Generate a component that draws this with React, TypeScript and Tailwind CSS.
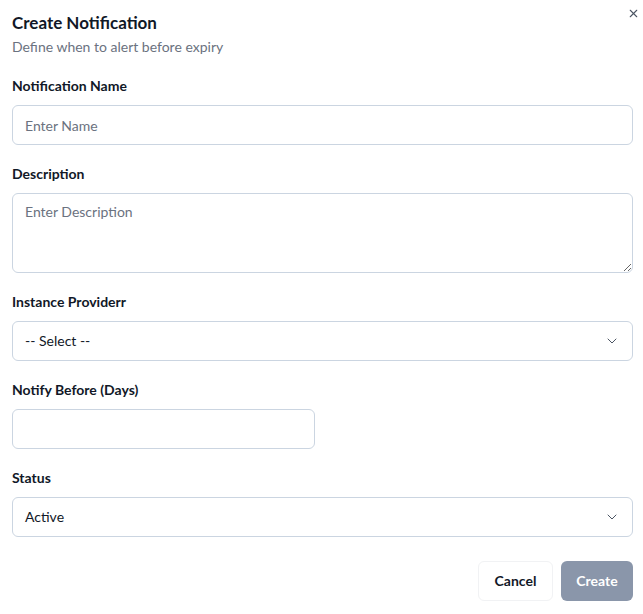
import { X, ChevronDown } from 'lucide-react'

const FONT = "font-['Lato','Segoe_UI','Noto_Sans',sans-serif]"

function Label({ children }: { children: React.ReactNode }) {
  return <label className="block text-sm leading-[18px] font-bold text-[#111827] mb-[10px]">{children}</label>
}

function Select({ value }: { value: string }) {
  return (
    <div className="relative">
      <div className="h-10 w-full rounded-md border border-[#cbd5e1] bg-white px-3 flex items-center text-sm text-[#111827]">
        {value}
      </div>
      <ChevronDown className="absolute right-[13px] top-[12px] w-4 h-4 text-[#4b5563]" strokeWidth={1.5} />
    </div>
  )
}

export default function App() {
  return (
    <div className={`${FONT} relative bg-white w-[643px] h-[614px] pl-3 pr-[10px] pt-[9px]`}>
      <button className="absolute right-[3px] top-[7px] text-[#4b5563]">
        <X className="w-[13px] h-[13px]" strokeWidth={2} />
      </button>

      <h2 className="text-[17px] leading-7 font-bold text-[#111827]">Create Notification</h2>
      <p className="text-sm leading-5 text-[#6b7280]">Define when to alert before expiry</p>

      <div className="mt-5 flex flex-col gap-5">
        <div>
          <Label>Notification Name</Label>
          <input
            placeholder="Enter Name"
            className="h-10 w-full rounded-md border border-[#cbd5e1] px-3 text-sm placeholder:text-[#6b7280] outline-none"
          />
        </div>

        <div>
          <Label>Description</Label>
          <textarea
            placeholder="Enter Description"
            className="block h-20 w-full rounded-md border border-[#cbd5e1] px-3 py-2 text-sm placeholder:text-[#6b7280] outline-none"
          />
        </div>

        <div>
          <Label>Instance Providerr</Label>
          <Select value="-- Select --" />
        </div>

        <div>
          <Label>Notify Before (Days)</Label>
          <input className="h-10 w-[303px] rounded-md border border-[#cbd5e1] px-3 text-sm outline-none" />
        </div>

        <div>
          <Label>Status</Label>
          <Select value="Active" />
        </div>
      </div>

      <div className="mt-6 flex justify-end gap-2">
        <button className="h-10 w-[75px] rounded-md border border-[#f1f2f4] bg-white text-sm font-bold text-[#111827]">
          Cancel
        </button>
        <button className="h-10 w-[72px] rounded-md bg-[#8a96aa] text-sm font-bold text-white">
          Create
        </button>
      </div>
    </div>
  )
}
